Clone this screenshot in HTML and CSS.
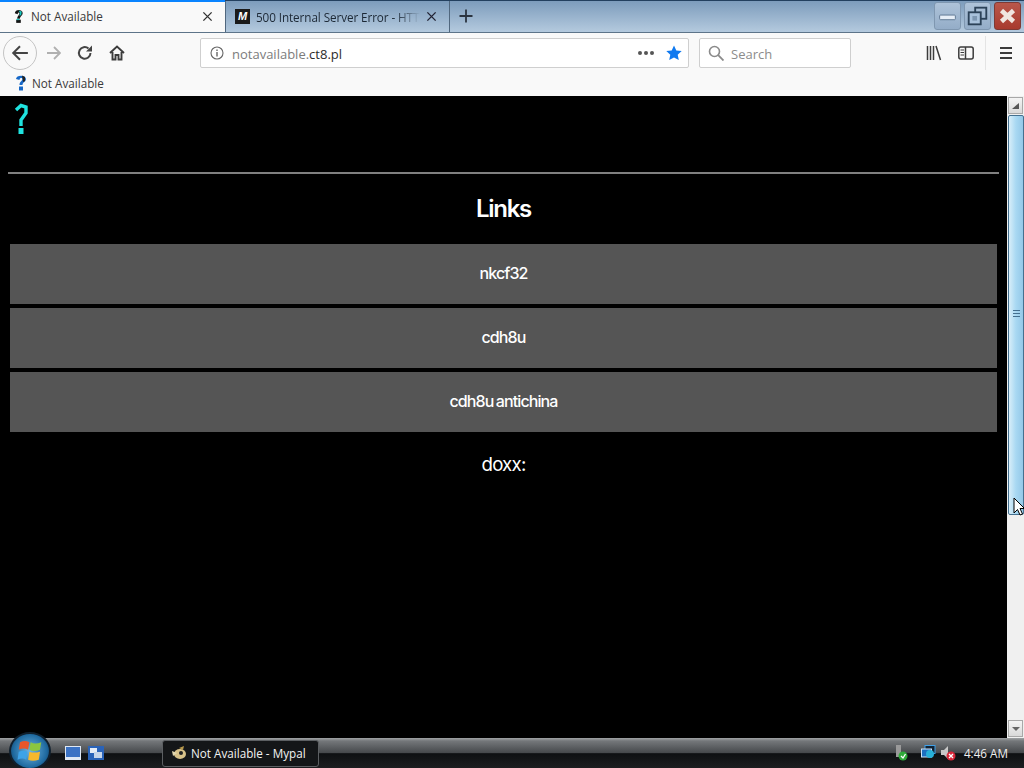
FILE: index.html
```html
<!DOCTYPE html>
<html lang="en">
<head>
  <meta charset="UTF-8" />
  <title>Not Available - Mypal</title>
  <link rel="stylesheet" href="styles.css">
</head>
<body>
  <div class="tabbar">
    <div class="tab tab-active">
      <svg class="favicon" viewBox="0 0 12 16"><path d="M2 5 C2 0.500 10 0 10.500 4.500 C10.800 7.500 8 8 7.500 11 L4.500 11 C4.500 8 7 7 7 5 C7 3.500 5.500 4 5 6 Z" fill="#141414"/><path d="M6 2 L9.500 3 L9 7 L7 8 L7.500 4.500 Z" fill="#18c9c0"/><rect x="3.500" y="12" width="5" height="3.500" fill="#141414"/><rect x="4" y="11" width="3" height="1.500" fill="#18c9c0"/></svg>
      <span class="tab-title">Not Available</span>
      <svg class="tab-close" viewBox="0 0 12 12"><path d="M1.500 1.500 L10.500 10.500 M10.500 1.500 L1.500 10.500" stroke="#333" stroke-width="1.500"/></svg>
    </div>
    <div class="tab tab-other">
      <div class="m-icon">M</div>
      <span class="tab-title">500 Internal Server Error - HTTP</span>
      <svg class="tab-close" viewBox="0 0 12 12"><path d="M1.500 1.500 L10.500 10.500 M10.500 1.500 L1.500 10.500" stroke="#223" stroke-width="1.500"/></svg>
    </div>
    <svg class="new-tab" viewBox="0 0 14 14"><path d="M7 0.500 V13.500 M0.500 7 H13.500" stroke="#2b3440" stroke-width="1.800"/></svg>
    <div class="win-controls">
      <div class="win-btn">
        <svg viewBox="0 0 27 28" width="27" height="28"><rect x="5" y="13" width="17" height="5" rx="1" fill="#e6eef7" stroke="#5b7490"/></svg>
      </div>
      <div class="win-btn">
        <svg viewBox="0 0 27 28" width="27" height="28"><rect x="11" y="5" width="12" height="12" fill="none" stroke="#2c4258" stroke-width="2"/><rect x="4" y="10" width="13" height="13" fill="#a9c2dc" stroke="#2c4258" stroke-width="2"/><rect x="8" y="14" width="5" height="5" fill="#7d97b2"/></svg>
      </div>
      <div class="win-btn win-close">
        <svg viewBox="0 0 27 28" width="27" height="28"><path d="M7 8 L20 20 M20 8 L7 20" stroke="#f0e6e0" stroke-width="5"/></svg>
      </div>
    </div>
  </div>

  <div class="toolbar">
    <div class="back-btn">
      <svg viewBox="0 0 16 16" width="18" height="18"><path d="M15 8 H2 M8 2 L2 8 L8 14" fill="none" stroke="#444" stroke-width="1.800"/></svg>
    </div>
    <svg class="tool-icon" viewBox="0 0 16 16"><path d="M15 8 H2 M9 2 L15 8 L9 14" fill="none" stroke="#b0b0b0" stroke-width="1.800"/></svg>
    <svg class="tool-icon reload" viewBox="0 0 16 16"><path d="M13.500 8 A5.800 5.800 0 1 1 11.500 3.500" fill="none" stroke="#444" stroke-width="2"/><path d="M9 6.500 H15 V0.500 Z" fill="#444"/></svg>
    <svg class="tool-icon home" viewBox="0 0 16 16"><path d="M1 8 L8 1.500 L15 8 M3.500 7 V14.500 H6.500 V10 H9.500 V14.500 H12.500 V7" fill="none" stroke="#3c3c3c" stroke-width="1.900"/></svg>
    <div class="urlbar">
      <svg class="info-icon" viewBox="0 0 14 14"><circle cx="7" cy="7" r="6" fill="none" stroke="#666" stroke-width="1.100"/><path d="M7 6 V10.500 M7 3.500 V5" stroke="#666" stroke-width="1.400"/></svg>
      <span class="url"><span class="url-dim">notavailable.</span>ct8.pl</span>
      <span class="dots"><i></i><i></i><i></i></span>
      <svg class="star" viewBox="0 0 16 16"><path d="M8 0.500 L10.300 5.400 L15.700 6 L11.700 9.700 L12.800 15.100 L8 12.400 L3.200 15.100 L4.300 9.700 L0.300 6 L5.700 5.400 Z" fill="#0f79f0"/></svg>
    </div>
    <div class="searchbar">
      <svg class="search-icon" viewBox="0 0 16 16"><circle cx="6.500" cy="6.500" r="5" fill="none" stroke="#8a8a8a" stroke-width="1.600"/><path d="M10.200 10.200 L15.500 15.500" stroke="#8a8a8a" stroke-width="1.800"/></svg>
      <span class="search-text">Search</span>
    </div>
    <div class="tool-right">
      <svg class="tool-icon" viewBox="0 0 16 16"><path d="M1.500 1 V15 M4.500 1 V15 M7.500 1 V15 M10 1 L14.500 15" fill="none" stroke="#3c3c3c" stroke-width="1.500"/></svg>
      <svg class="tool-icon sidebar-icon" viewBox="0 0 16 16"><rect x="0.800" y="2" width="14.400" height="12" rx="2" fill="none" stroke="#3c3c3c" stroke-width="1.500"/><path d="M7.500 2 V14" stroke="#3c3c3c" stroke-width="1.500"/><path d="M2.500 5 H6 M2.500 7.500 H6 M2.500 10 H6" stroke="#3c3c3c"/></svg>
      <div class="tool-sep"></div>
      <svg class="tool-icon menu-icon" viewBox="0 0 16 16"><path d="M2 3 H14 M2 8 H14 M2 13 H14" stroke="#3c3c3c" stroke-width="1.800"/></svg>
    </div>
  </div>

  <div class="bookmarks">
    <svg class="bm-icon" viewBox="0 0 14 18"><path d="M2 5 C2 0.500 12 0.500 12 5 C12 8 8.500 8 8.500 11 L5.500 11 C5.500 7.500 8.500 7 8.500 5 C8.500 3.500 5.500 3.500 5.500 6 Z" fill="#1668c8"/><path d="M8 1.500 L11 3 L11 7 L9 8 Z" fill="#222"/><rect x="5" y="12.500" width="4" height="4" fill="#1668c8"/></svg>
    <span>Not Available</span>
  </div>

  <div class="viewport">
    <div class="page">
      <svg class="site-logo" viewBox="0 0 14 32"><path d="M2 8 L7 3.500 L12 5 L12 11 L7 18 L7 24" fill="none" stroke="#1fe3df" stroke-width="3.400"/><rect x="4.500" y="26" width="5" height="6" fill="#1fe3df"/></svg>
      <hr class="rule">
      <h2 class="links-title">Links</h2>
      <a class="link-btn">nkcf32</a>
      <a class="link-btn">cdh8u</a>
      <a class="link-btn">cdh8u antichina</a>
      <h3 class="doxx">doxx:</h3>
    </div>
    <div class="scrollbar">
      <div class="sb-btn"><svg viewBox="0 0 10 10" width="10" height="10"><path d="M1 8 H8 V2 Z" fill="#555"/></svg></div>
      <div class="sb-thumb"><div class="grip"></div></div>
      <div class="sb-rest"></div>
      <div class="sb-btn"><svg viewBox="0 0 10 10" width="10" height="10"><path d="M1 3 H9 L5 7 Z" fill="#666"/></svg></div>
    </div>
    <svg class="cursor" viewBox="0 0 12 20" width="12" height="20"><path d="M1 1 V16 L4.500 12.500 L7 18 L9.500 17 L7 11.500 L11.500 11.500 Z" fill="#fff" stroke="#000"/></svg>
  </div>

  <div class="taskbar">
    <div class="orb">
      <svg viewBox="0 0 24 24" width="30" height="30"><path d="M4 5 Q8 3 11.500 5 L10.500 11 Q7 9 3 11 Z" fill="#e8562a"/><path d="M12.500 5 Q16 7 21 5 L20 11 Q15 13 11.500 11 Z" fill="#8cc63f"/><path d="M3 12.500 Q7 11 10 12.500 L9 19 Q6 17 2 19 Z" fill="#3ea3e8"/><path d="M11.500 12.500 Q15 14 20 12.500 L19 19 Q14 20.500 10.500 19 Z" fill="#f6b82c"/></svg>
    </div>
    <svg class="quick" viewBox="0 0 16 14"><rect width="16" height="14" fill="#dfe8f4"/><rect x="1" y="1" width="14" height="10" fill="#3b72c4"/></svg>
    <svg class="quick quick-two" viewBox="0 0 16 14"><rect width="16" height="14" fill="#2a63b8"/><rect x="2" y="2" width="7" height="5" fill="#e6edf6"/><rect x="6" y="6" width="8" height="6" fill="#c7d6ea"/></svg>
    <div class="task-item">
      <svg class="task-icon" viewBox="0 0 16 16"><ellipse cx="9" cy="9" rx="6" ry="5" fill="#d8c28a"/><path d="M1 6 L6 8 L2 11 Z" fill="#e3d7b0"/><circle cx="10" cy="8" r="2" fill="#222"/><path d="M8 3 L13 1 L12 5 Z" fill="#b99a4c"/></svg>
      <span>Not Available - Mypal</span>
    </div>
    <div class="tray">
      <svg class="tray-usb" viewBox="0 0 16 16"><rect x="3" y="0" width="5" height="12" fill="#9a9a9a"/><circle cx="10" cy="11" r="4.500" fill="#2faa3a"/><path d="M8 11 L10 13 L12.500 9" fill="none" stroke="#fff" stroke-width="1.300"/></svg>
      <svg class="tray-net" viewBox="0 0 16 16"><rect x="4" y="0.500" width="10" height="8" fill="#123" stroke="#3fa0e8"/><rect x="0.500" y="4" width="10" height="8" fill="#1d6fc0" stroke="#cfe6fa"/><circle cx="9" cy="9" r="4" fill="#27b0d8"/></svg>
      <svg class="tray-vol" viewBox="0 0 16 16"><path d="M1 5 H4 L8 1 V14 L4 10 H1 Z" fill="#c8c8c8"/><circle cx="11" cy="11" r="4.500" fill="#d8283a"/><path d="M9 9 L13 13 M13 9 L9 13" stroke="#fff" stroke-width="1.300"/></svg>
      <span class="clock">4:46 AM</span>
    </div>
  </div>
</body>
</html>
```

FILE: styles.css
```css
* {
  box-sizing: border-box;
}

html, body {
  height: 100%;
}

body {
  margin: 0;
  display: flex;
  flex-direction: column;
  height: 768px;
  overflow: hidden;
  font-family: "Open Sans", "Liberation Sans", sans-serif;
  background: #000;
}

/* tabs + window buttons */
.tabbar {
  display: flex;
  align-items: stretch;
  height: 33px;
  background: linear-gradient(#7d9cbc, #b4cade);
  border-top: 1px solid #23405f;
  border-bottom: 1px solid #5d7489;
  position: relative;
}

.tab {
  display: flex;
  align-items: center;
  font-size: 11.700px;
}

.tab-active {
  width: 225px;
  height: 32px;
  margin-top: -1px;
  padding: 0 12px 2px 13px;
  background: #f9f9f9;
  border-top: 2px solid #0a84ff;
  color: #3a3a3a;
  z-index: 1;
}

.tab-other {
  width: 225px;
  padding: 0 12px 0 9px;
  border-left: 1px solid #50677e;
  border-right: 1px solid #50677e;
  color: #1c2835;
  letter-spacing: -0.080px;
}

.favicon {
  width: 11px;
  height: 16px;
  margin-right: 7px;
  flex: none;
}

.m-icon {
  width: 15px;
  height: 15px;
  margin-right: 6px;
  flex: none;
  background: #1a1a1a;
  color: #fff;
  font: italic bold 11px/15px "Liberation Sans", sans-serif;
  text-align: center;
}

.tab-title {
  flex: 1;
  overflow: hidden;
  white-space: nowrap;
  min-width: 0;
}

.tab-other .tab-title {
  -webkit-mask-image: linear-gradient(to right, #000 85%, transparent);
  mask-image: linear-gradient(to right, #000 85%, transparent);
}

.tab-close {
  width: 11px;
  height: 11px;
  margin-left: 6px;
  flex: none;
}

.new-tab {
  width: 14px;
  height: 14px;
  margin: 8px 0 0 9px;
}

.win-controls {
  display: flex;
  gap: 3px;
  margin-left: auto;
  margin-right: 3px;
  height: 28px;
  margin-top: 1px;
}

.win-btn {
  width: 27px;
  height: 28px;
  border: 1px solid #7f97b0;
  border-radius: 3px;
  background: linear-gradient(#aec3d9, #94adc8);
  display: flex;
  align-items: center;
  justify-content: center;
}

.win-close {
  background: linear-gradient(#b9574a, #a83a2e);
  border-color: #7d3a35;
}

/* nav toolbar */
.toolbar {
  display: flex;
  align-items: center;
  height: 38px;
  background: #f9f9f9;
  padding: 2px 0 0 3px;
}

.back-btn {
  width: 34px;
  height: 34px;
  border-radius: 50%;
  border: 1px solid #c4c4c4;
  display: flex;
  align-items: center;
  justify-content: center;
  margin-right: 8px;
  flex: none;
}

.tool-icon {
  width: 16px;
  height: 16px;
  flex: none;
}

.reload {
  margin-left: 16px;
}

.home {
  margin-left: 16px;
}

.urlbar {
  display: flex;
  align-items: center;
  width: 489px;
  height: 30px;
  margin-left: 75px;
  padding: 0 6px 0 9px;
  background: #fff;
  border: 1px solid #cfcfcf;
  border-radius: 2px;
  font-size: 13px;
  color: #2b2b2b;
}

.info-icon {
  width: 14px;
  height: 14px;
  margin-right: 8px;
  flex: none;
}

.url {
  flex: 1;
  padding-top: 2px;
}

.url-dim {
  color: #7c7c7c;
}

.dots {
  display: flex;
  gap: 2px;
  margin-right: 12px;
}

.dots i {
  width: 4px;
  height: 4px;
  border-radius: 50%;
  background: #555;
}

.star {
  width: 16px;
  height: 16px;
  flex: none;
}

.searchbar {
  display: flex;
  align-items: center;
  width: 152px;
  height: 30px;
  margin-left: 10px;
  padding-left: 8px;
  background: #fff;
  border: 1px solid #cfcfcf;
  border-radius: 2px;
  font-size: 13px;
  color: #8c8c8c;
}

.search-text {
  padding-top: 2px;
}

.search-icon {
  width: 16px;
  height: 16px;
  margin-right: 7px;
}

.tool-right {
  display: flex;
  align-items: center;
  margin-left: 75px;
}

.sidebar-icon {
  margin-left: 16px;
}

.tool-sep {
  width: 1px;
  height: 34px;
  background: #e4e4e4;
  margin: 0 12px 0 11px;
}

/* bookmarks row */
.bookmarks {
  display: flex;
  align-items: center;
  height: 25px;
  padding: 0 0 2px 14px;
  background: #f9f9f9;
  font-size: 11.700px;
  color: #3a3a3a;
}

.bm-icon {
  width: 14px;
  height: 18px;
  margin-right: 4px;
}

/* page area */
.viewport {
  display: flex;
  flex: 1;
  min-height: 0;
  position: relative;
}

.page {
  flex: 1;
  padding: 6px 8px 0;
  background: #000;
  color: #fff;
  font-family: Inter, "Liberation Sans", sans-serif;
  text-align: center;
}

.site-logo {
  display: block;
  width: 14px;
  height: 32px;
  margin-left: 6px;
}

.rule {
  margin: 38px 0 0;
  border: 0;
  border-top: 2px solid #808080;
}

.links-title {
  margin: 20px 0 21px;
  font-size: 24px;
  line-height: 29px;
  font-weight: 600;
  letter-spacing: -1.300px;
}

.link-btn {
  display: block;
  height: 60px;
  margin: 0 2px 4px;
  background: #555;
  font-size: 16px;
  line-height: 59px;
  font-weight: 500;
  letter-spacing: -0.900px;
  word-spacing: -1px;
}

.doxx {
  margin: 21px 0 0;
  font-size: 18.700px;
  line-height: 23px;
  font-weight: 400;
  letter-spacing: -0.800px;
}

.scrollbar {
  display: flex;
  flex-direction: column;
  width: 17px;
  background: #f0f0f0;
}

.sb-btn {
  height: 17px;
  margin: 1px;
  flex: none;
  background: linear-gradient(#f4f4f4, #d9d9d9);
  border: 1px solid #a8a8a8;
  display: flex;
  align-items: center;
  justify-content: center;
}

.sb-thumb {
  height: 400px;
  margin-left: 1px;
  flex: none;
  background: linear-gradient(to right, #d8eef9, #a8d8f2 50%, #94c8e8);
  border: 1px solid #44708f;
  border-radius: 2px;
  display: flex;
  align-items: center;
  justify-content: center;
}

.grip {
  width: 7px;
  height: 7px;
  margin-bottom: 4px;
  border-top: 1px solid #44708f;
  border-bottom: 1px solid #44708f;
  background: linear-gradient(transparent 40%, #44708f 40%, #44708f 60%, transparent 60%);
}

.sb-rest {
  flex: 1;
}

.cursor {
  position: absolute;
  left: 1013px;
  top: 401px;
}

/* windows taskbar */
.taskbar {
  display: flex;
  align-items: center;
  height: 30px;
  position: relative;
  background: linear-gradient(#a0a3a5, #74777a 10%, #45484b 50%, #0e1012 52%, #1c1e20);
  color: #fff;
  font-size: 11.700px;
}

.orb {
  position: absolute;
  left: 9px;
  top: -6px;
  width: 42px;
  height: 38px;
  border-radius: 50%;
  border: 2px solid #10202e;
  background: radial-gradient(circle, #6fb4e2, #1f6aa0 65%, #0c2a44);
  display: flex;
  align-items: center;
  justify-content: center;
}

.quick {
  width: 16px;
  height: 14px;
  margin-left: 65px;
}

.quick-two {
  margin-left: 7px;
}

.task-item {
  display: flex;
  align-items: center;
  width: 157px;
  height: 27px;
  margin-left: 58px;
  padding-left: 8px;
  background: #141618;
  border: 1px solid #5c5f62;
  border-radius: 3px;
  color: #f2f2f2;
}

.task-icon {
  width: 16px;
  height: 16px;
  margin-right: 4px;
}

.tray {
  display: flex;
  align-items: center;
  margin-left: auto;
  padding-right: 16px;
}

.tray svg {
  width: 16px;
  height: 16px;
}

.tray-net {
  margin-left: 12px;
}

.tray-vol {
  margin-left: 3px;
}

.clock {
  margin-left: 8px;
  color: #eee;
}
```
